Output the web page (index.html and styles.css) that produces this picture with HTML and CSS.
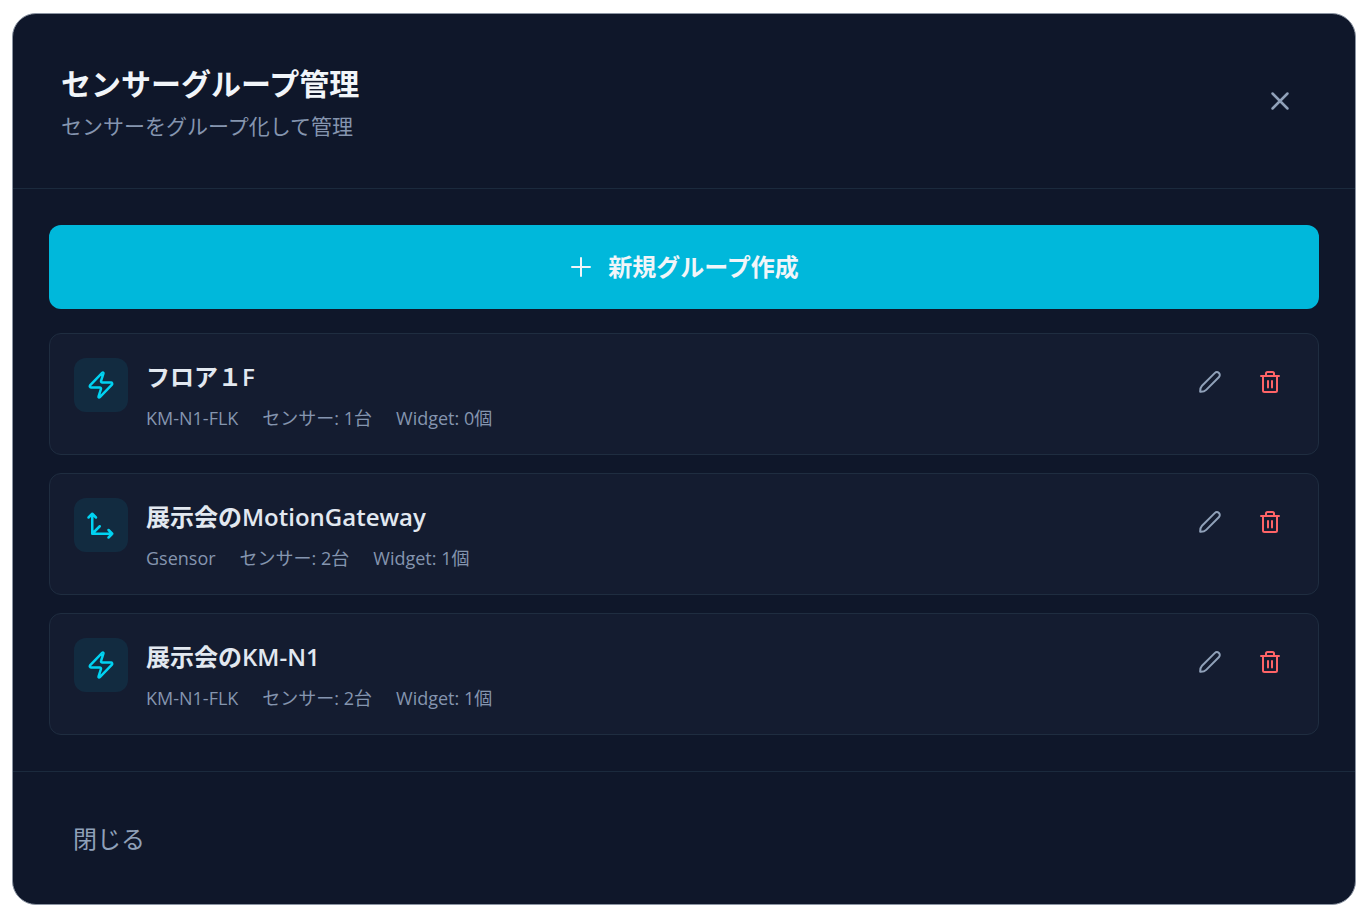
FILE: index.html
```html
<!DOCTYPE html>
<html lang="ja">
<head>
<meta charset="utf-8">
<title>センサーグループ管理</title>
<link rel="stylesheet" href="styles.css">
</head>
<body>
<svg class="sprite" aria-hidden="true">
  <symbol id="zap" viewBox="0 0 24 24"><path d="M4 14a1 1 0 0 1-.78-1.63l9.9-10.2a.5.5 0 0 1 .86.46l-1.92 6.02A1 1 0 0 0 13 10h7a1 1 0 0 1 .78 1.63l-9.9 10.2a.5.5 0 0 1-.86-.46l1.92-6.02A1 1 0 0 0 11 14z"/></symbol>
  <symbol id="axes" viewBox="0 0 24 24"><path d="M5 3v16h16M5 19l6-6M2 6l3-3 3 3M18 16l3 3-3 3"/></symbol>
  <symbol id="pencil" viewBox="0 0 24 24"><path d="M2.200 21.800c-.1-2.400.2-4.300 1.800-6L16.700 3.100c1.300-1.300 3-1.300 4.200-.1s1.200 2.900-.1 4.200L8.200 19.900c-1.600 1.600-3.600 2-6 1.900z"/></symbol>
  <symbol id="trash" viewBox="0 0 24 24"><path d="M3 6h18M5 6v14.500a1.500 1.500 0 0 0 1.500 1.500h11a1.500 1.500 0 0 0 1.500-1.500V6M8 6V3.500A1.500 1.500 0 0 1 9.500 2h5A1.500 1.500 0 0 1 16 3.500V6M10 11v6.500M14 11v6.500"/></symbol>
  <symbol id="plus" viewBox="0 0 24 24"><path d="M12 3v18M3 12h18"/></symbol>
  <symbol id="cross" viewBox="0 0 24 24"><path d="M6 6l12 12M18 6L6 18"/></symbol>
</svg>
<main class="dialog" role="dialog" aria-labelledby="dialog-title">
  <header class="dialog-header">
    <div>
      <h1 class="dialog-title" id="dialog-title">センサーグループ管理</h1>
      <p class="dialog-subtitle">センサーをグループ化して管理</p>
    </div>
    <button class="icon-button" type="button" aria-label="ダイアログを閉じる"><svg class="icon-large"><use href="#cross"/></svg></button>
  </header>
  <div class="dialog-body">
    <button class="create-button" type="button"><svg class="icon"><use href="#plus"/></svg><span>新規グループ作成</span></button>
    <ul class="groups">
      <li class="group">
        <span class="group-icon"><svg class="icon-large"><use href="#zap"/></svg></span>
        <div class="group-text">
          <h2 class="group-name">フロア１F</h2>
          <p class="group-meta"><span>KM-N1-FLK</span><span>センサー: 1台</span><span>Widget: 0個</span></p>
        </div>
        <div class="actions">
          <button class="icon-button" type="button" aria-label="編集"><svg class="icon"><use href="#pencil"/></svg></button>
          <button class="icon-button danger" type="button" aria-label="削除"><svg class="icon"><use href="#trash"/></svg></button>
        </div>
      </li>
      <li class="group">
        <span class="group-icon"><svg class="icon-large"><use href="#axes"/></svg></span>
        <div class="group-text">
          <h2 class="group-name">展示会のMotionGateway</h2>
          <p class="group-meta"><span>Gsensor</span><span>センサー: 2台</span><span>Widget: 1個</span></p>
        </div>
        <div class="actions">
          <button class="icon-button" type="button" aria-label="編集"><svg class="icon"><use href="#pencil"/></svg></button>
          <button class="icon-button danger" type="button" aria-label="削除"><svg class="icon"><use href="#trash"/></svg></button>
        </div>
      </li>
      <li class="group">
        <span class="group-icon"><svg class="icon-large"><use href="#zap"/></svg></span>
        <div class="group-text">
          <h2 class="group-name">展示会のKM-N1</h2>
          <p class="group-meta"><span>KM-N1-FLK</span><span>センサー: 2台</span><span>Widget: 1個</span></p>
        </div>
        <div class="actions">
          <button class="icon-button" type="button" aria-label="編集"><svg class="icon"><use href="#pencil"/></svg></button>
          <button class="icon-button danger" type="button" aria-label="削除"><svg class="icon"><use href="#trash"/></svg></button>
        </div>
      </li>
    </ul>
  </div>
  <footer class="dialog-footer">
    <button class="text-button" type="button">閉じる</button>
  </footer>
</main>
</body>
</html>
```
FILE: styles.css
```css
* { box-sizing: border-box; margin: 0; padding: 0; }

body {
  padding: 13px 13px 14px 12px;
  background: #fff;
  color: #e2e8f0;
  font-family: "Open Sans", "Noto Sans CJK JP", sans-serif;
}

button { border: 0; background: none; color: inherit; font: inherit; cursor: pointer; }

.sprite { display: none; }

.icon, .icon-large {
  display: block;
  fill: none;
  stroke: currentColor;
  stroke-width: 2;
  stroke-linecap: round;
  stroke-linejoin: round;
}
.icon { width: 24px; height: 24px; }
.icon-large { width: 30px; height: 30px; }

.dialog {
  border: 1px solid #8b94a2;
  border-radius: 24px;
  background: #0f172a;
}

.dialog-header {
  display: flex;
  align-items: center;
  justify-content: space-between;
  padding: 48px;
  border-bottom: 1px solid #1b2a3d;
}
.dialog-title { font-size: 30px; line-height: 44px; font-weight: 700; color: #f1f5f9; }
.dialog-subtitle { margin-top: 6px; font-size: 21px; line-height: 28px; color: #8595af; }

.icon-button { padding: 12px; border-radius: 12px; color: #90a1b9; }
.danger { color: #ff6467; }

.dialog-body { padding: 36px; }

.create-button {
  display: flex;
  align-items: center;
  justify-content: center;
  gap: 15px;
  width: 100%;
  padding: 23px;
  border-radius: 12px;
  background: #00b8db;
  color: #f1f5f9;
  font-size: 24px;
  line-height: 38px;
  font-weight: 600;
}

.groups { display: grid; gap: 18px; margin-top: 24px; list-style: none; }
.group {
  display: flex;
  align-items: flex-start;
  gap: 18px;
  padding: 24px;
  border: 1px solid #1f2d40;
  border-radius: 12px;
  background: #141c30;
}
.group-icon { padding: 12px; border-radius: 12px; background: #122b40; color: #00d3f2; }
.group-text { flex: 1; }
.group-name { font-size: 24px; line-height: 38px; font-weight: 600; }
.group-meta {
  display: flex;
  flex-wrap: wrap;
  gap: 24px;
  margin-top: 10px;
  font-size: 18px;
  line-height: 24px;
  color: #8595af;
}
.actions { display: flex; gap: 12px; }

.dialog-footer { padding: 36px; border-top: 1px solid #1b2a3d; }
.text-button { padding: 13px 24px 11px; font-size: 24px; line-height: 36px; color: #90a1b9; }
```
